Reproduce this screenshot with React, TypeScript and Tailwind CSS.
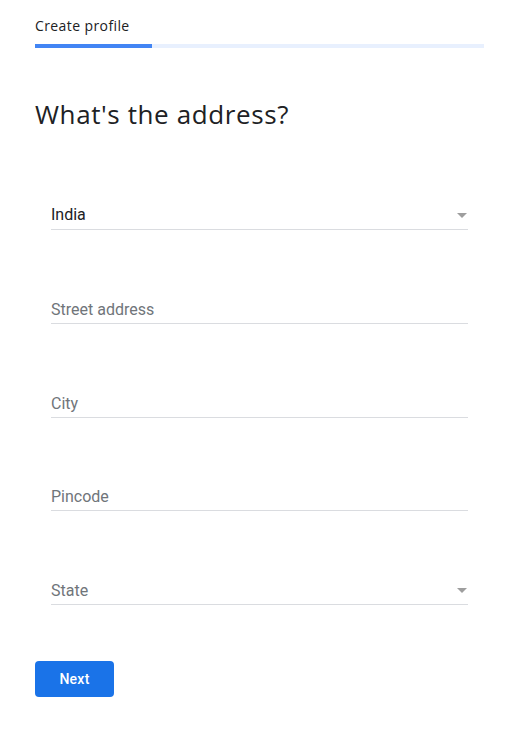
import React from 'react';

const Field = ({ label, value, select }: { label: string; value?: string; select?: boolean }) => (
	<div className="flex items-end justify-between border-b border-[#dadce0] pb-[4px] h-[30px]">
		<span
			className={
				value
					? 'text-[16px] leading-[20px] text-[#202124]'
					: 'text-[16px] leading-[20px] text-[#70757a] translate-y-[1px]'
			}
		>
			{value || label}
		</span>
		{select && (
			<span className="mb-[7px] mr-[1px] w-0 h-0 border-l-[5.5px] border-r-[5.5px] border-t-[5px] border-l-transparent border-r-transparent border-t-[#9e9e9e]" />
		)}
	</div>
);

export default function App() {
	return (
		<div className="w-[514px] h-[739px] bg-white pl-[35px] pr-[30px] font-['Roboto',sans-serif]">
			<div className="pt-[17px] text-[14px] tracking-[0.4px] text-[#202124] leading-[18px] font-['Open_Sans',sans-serif]">
				Create profile
			</div>
			<div className="mt-[9px] h-[4px] w-[449px] bg-[#e8f0fe] flex">
				<div className="h-full w-[117px] bg-[#4285f4]" />
			</div>
			<h1 className="mt-[50px] text-[26px] leading-[32px] tracking-[0.6px] text-[#202124] font-normal font-['Open_Sans',sans-serif]">
				What's the address?
			</h1>
			<div className="mt-[70px] px-[16px] flex flex-col gap-[63.75px]">
				<Field label="Country" value="India" select />
				<Field label="Street address" />
				<Field label="City" />
				<Field label="Pincode" />
				<Field label="State" select />
			</div>
			<button className="mt-[56px] w-[79px] h-[36px] rounded-[4px] bg-[#1a73e8] text-white text-[14px] font-medium tracking-[0.25px]">
				Next
			</button>
		</div>
	);
}
